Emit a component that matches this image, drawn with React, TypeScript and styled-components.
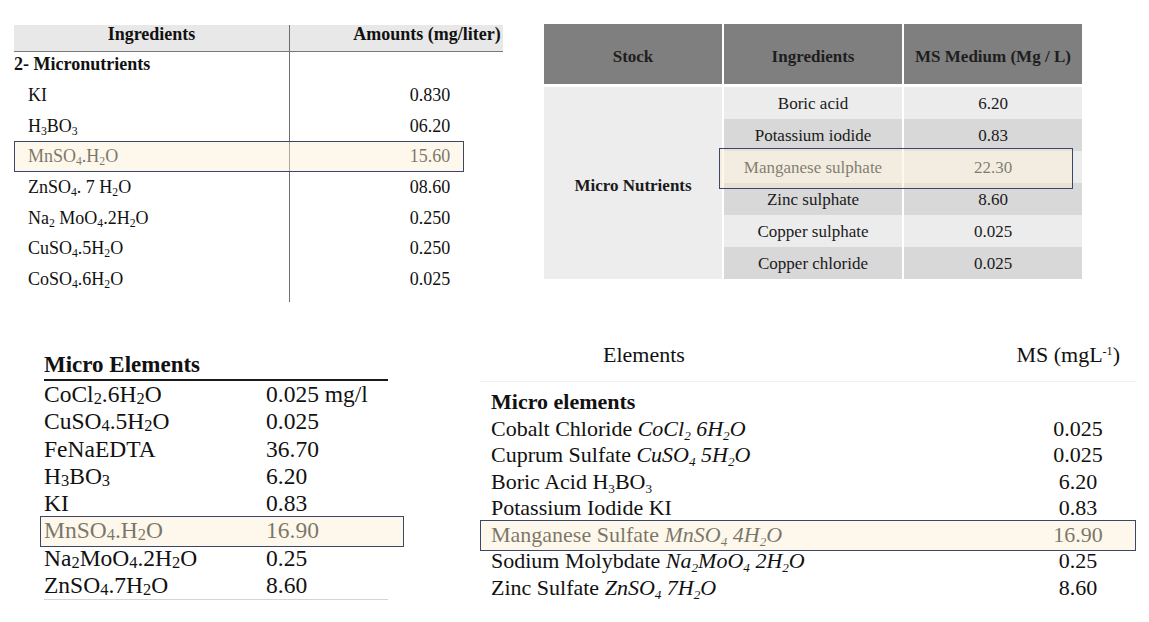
import React from 'react';
import styled, { createGlobalStyle, css } from 'styled-components';

const GlobalStyle = createGlobalStyle`
  html, body {
    margin: 0;
    padding: 0;
    background: #fff;
  }
  body {
    font-family: "Liberation Serif", "Times New Roman", serif;
    color: #111;
  }
`;

// the blue-framed cream box drawn over one row of each table
const highlightBox = css`
  content: '';
  position: absolute;
  z-index: 2;
  box-sizing: border-box;
  border: 1.5px solid #3b4769;
  background: rgba(250, 240, 210, 0.45);
  pointer-events: none;
`;

const Page = styled.div`
  width: 1149px;
  height: 622px;
  overflow: hidden;
  background: #fff;
`;

const TopRow = styled.div`
  display: flex;
  align-items: flex-start;
  gap: 41px;
  height: 340px;
  box-sizing: border-box;
  padding: 24px 0 0 14px;
`;

const BottomRow = styled.div`
  display: flex;
  align-items: flex-start;
  gap: 92px;
  padding-left: 44px;
`;

const Sub = styled.sub<{ $drop?: number; $size?: number }>`
  font-size: ${p => p.$size ?? 0.65}em;
  vertical-align: ${p => p.$drop ?? -0.25}em;
  line-height: 0;
`;

const Sup = styled.sup`
  font-size: 0.55em;
  vertical-align: 0.6em;
  line-height: 0;
`;

/* ---------- table 1 : ingredients / amounts ---------- */

const SheetTable = styled.div`
  width: 489px;
  margin-top: 1px;
  overflow: hidden;
  font-size: 18px;
`;

const SheetHead = styled.div`
  display: grid;
  grid-template-columns: 276px 280px;
  height: 26px;
  line-height: 18px;
  background: #e8e8e8;
  border-bottom: 1px solid #7a7a7a;
  font-weight: bold;
`;

const SheetHeadCell = styled.div<{ $divider?: boolean }>`
  text-align: center;
  white-space: nowrap;
  padding-right: ${p => (p.$divider ? '0' : '6px')};
  border-right: ${p => (p.$divider ? '1px solid #6e6e6e' : 'none')};
`;

const SheetBody = styled.div`
  padding-bottom: 7px;
  background: linear-gradient(#6e6e6e, #6e6e6e) 275px 0 / 1px 100% no-repeat;
`;

const SheetSection = styled.div`
  height: 28px;
  line-height: 24px;
  font-weight: bold;
`;

const SheetRow = styled.div<{ $hl?: boolean }>`
  position: relative;
  display: grid;
  grid-template-columns: 276px 280px;
  height: 30.7px;
  line-height: 30.7px;
  white-space: nowrap;

  ${p =>
    p.$hl &&
    css`
      &::after {
        ${highlightBox};
        left: 0;
        top: 0;
        bottom: 0;
        width: 450px;
      }
    `}
`;

const SheetName = styled.div`
  padding-left: 14px;
`;

const SheetAmount = styled.div`
  text-align: center;
`;

/* ---------- table 2 : stock / MS medium ---------- */

const StockTable = styled.div`
  display: grid;
  grid-template-columns: repeat(3, 178px);
  column-gap: 2px;
  width: 538px;
  font-size: 17px;
  color: #1a1a1a;
`;

const StockHead = styled.div`
  display: flex;
  align-items: center;
  justify-content: center;
  box-sizing: border-box;
  height: 60px;
  padding-top: 6px;
  margin-bottom: 3px;
  background: #7f7f7f;
  font-weight: bold;
  color: #1e1e1e;
  white-space: nowrap;
`;

const StockGroup = styled.div`
  grid-row: span 6;
  display: flex;
  align-items: center;
  justify-content: center;
  padding-top: 6px;
  background: #ededed;
  font-weight: bold;
`;

const StockCell = styled.div<{ $shade?: boolean; $hl?: boolean }>`
  position: relative;
  display: flex;
  align-items: center;
  justify-content: center;
  box-sizing: border-box;
  height: 32px;
  padding-top: 2px;
  background: ${p => (p.$shade ? '#d8d8d8' : '#ececec')};
  white-space: nowrap;

  ${p =>
    p.$hl &&
    css`
      &::after {
        ${highlightBox};
        left: -5px;
        top: -3px;
        width: 354px;
        height: 41px;
      }
    `}
`;

/* ---------- table 3 : micro elements list ---------- */

const ElementList = styled.div`
  width: 344px;
  margin-top: 11px;
  font-size: 23.5px;
  border-bottom: 1px solid #d4d4d4;
`;

const ListTitle = styled.div`
  font-size: 23px;
  font-weight: bold;
  line-height: 28px;
  border-bottom: 2px solid #1a1a1a;
`;

const ListRow = styled.div<{ $hl?: boolean }>`
  position: relative;
  display: grid;
  grid-template-columns: 222px 1fr;
  height: 27.3px;
  line-height: 27.3px;
  white-space: nowrap;

  ${p =>
    p.$hl &&
    css`
      &::after {
        ${highlightBox};
        left: -4px;
        right: -16px;
        top: -1px;
        bottom: -2px;
      }
    `}
`;

/* ---------- table 4 : elements / MS ---------- */

const MediumTable = styled.div`
  width: 656px;
  font-size: 22px;
`;

const MediumHead = styled.div`
  display: grid;
  grid-template-columns: 500px 156px;
  height: 30px;
  line-height: 30px;
  padding-bottom: 11px;
  border-bottom: 1px solid #f0f0f0;
  white-space: nowrap;
`;

const MediumHeadName = styled.div`
  padding-left: 123px;
`;

const MediumHeadValue = styled.div`
  text-align: right;
  padding-right: 16px;
`;

const MediumBody = styled.div`
  padding-top: 7px;
`;

const MediumSection = styled.div`
  height: 26.5px;
  line-height: 26.5px;
  padding-left: 11px;
  font-weight: bold;
`;

const MediumRow = styled.div<{ $hl?: boolean }>`
  position: relative;
  display: grid;
  grid-template-columns: 548px 100px;
  height: 26.5px;
  line-height: 26.5px;
  white-space: nowrap;

  ${p =>
    p.$hl &&
    css`
      &::after {
        ${highlightBox};
        left: 0;
        right: 0;
        top: -1.5px;
        bottom: -3px;
      }
    `}
`;

const MediumName = styled.div`
  padding-left: 11px;
`;

const MediumValue = styled.div`
  text-align: center;
`;

const Formula = styled.i`
  font-style: italic;
`;

type Entry = { name: React.ReactNode; value: string; hl?: boolean };

const sheetRows: Entry[] = [
  { name: 'KI', value: '0.830' },
  { name: <>H<Sub>3</Sub>BO<Sub>3</Sub></>, value: '06.20' },
  { name: <>MnSO<Sub>4</Sub>.H<Sub>2</Sub>O</>, value: '15.60', hl: true },
  { name: <>ZnSO<Sub>4</Sub>. 7 H<Sub>2</Sub>O</>, value: '08.60' },
  { name: <>Na<Sub>2</Sub> MoO<Sub>4</Sub>.2H<Sub>2</Sub>O</>, value: '0.250' },
  { name: <>CuSO<Sub>4</Sub>.5H<Sub>2</Sub>O</>, value: '0.250' },
  { name: <>CoSO<Sub>4</Sub>.6H<Sub>2</Sub>O</>, value: '0.025' },
];

const stockRows: Entry[] = [
  { name: 'Boric acid', value: '6.20' },
  { name: 'Potassium iodide', value: '0.83' },
  { name: 'Manganese sulphate', value: '22.30', hl: true },
  { name: 'Zinc sulphate', value: '8.60' },
  { name: 'Copper sulphate', value: '0.025' },
  { name: 'Copper chloride', value: '0.025' },
];

const s = (n: string) => (
  <Sub $size={0.7} $drop={-0.1}>
    {n}
  </Sub>
);

const listRows: Entry[] = [
  { name: <>CoCl{s('2')}.6H{s('2')}O</>, value: '0.025 mg/l' },
  { name: <>CuSO{s('4')}.5H{s('2')}O</>, value: '0.025' },
  { name: 'FeNaEDTA', value: '36.70' },
  { name: <>H{s('3')}BO{s('3')}</>, value: '6.20' },
  { name: 'KI', value: '0.83' },
  { name: <>MnSO{s('4')}.H{s('2')}O</>, value: '16.90', hl: true },
  { name: <>Na{s('2')}MoO{s('4')}.2H{s('2')}O</>, value: '0.25' },
  { name: <>ZnSO{s('4')}.7H{s('2')}O</>, value: '8.60' },
];

const t = (n: string) => (
  <Sub $size={0.6} $drop={-0.3}>
    {n}
  </Sub>
);

const mediumRows: Entry[] = [
  { name: <>Cobalt Chloride <Formula>CoCl{t('2')} 6H{t('2')}O</Formula></>, value: '0.025' },
  { name: <>Cuprum Sulfate <Formula>CuSO{t('4')} 5H{t('2')}O</Formula></>, value: '0.025' },
  { name: <>Boric Acid H{t('3')}BO{t('3')}</>, value: '6.20' },
  { name: 'Potassium Iodide KI', value: '0.83' },
  { name: <>Manganese Sulfate <Formula>MnSO{t('4')} 4H{t('2')}O</Formula></>, value: '16.90', hl: true },
  { name: <>Sodium Molybdate <Formula>Na{t('2')}MoO{t('4')} 2H{t('2')}O</Formula></>, value: '0.25' },
  { name: <>Zinc Sulfate <Formula>ZnSO{t('4')} 7H{t('2')}O</Formula></>, value: '8.60' },
];

export default function App() {
  return (
    <>
      <GlobalStyle />
      <Page>
        <TopRow>
          <SheetTable>
            <SheetHead>
              <SheetHeadCell $divider>Ingredients</SheetHeadCell>
              <SheetHeadCell>Amounts (mg/liter)</SheetHeadCell>
            </SheetHead>
            <SheetBody>
              <SheetSection>2- Micronutrients</SheetSection>
              {sheetRows.map((r, i) => (
                <SheetRow key={i} $hl={r.hl}>
                  <SheetName>{r.name}</SheetName>
                  <SheetAmount>{r.value}</SheetAmount>
                </SheetRow>
              ))}
            </SheetBody>
          </SheetTable>

          <StockTable>
            <StockHead>Stock</StockHead>
            <StockHead>Ingredients</StockHead>
            <StockHead>MS Medium (Mg / L)</StockHead>
            <StockGroup>Micro Nutrients</StockGroup>
            {stockRows.map((r, i) => (
              <React.Fragment key={i}>
                <StockCell $shade={i % 2 === 1} $hl={r.hl}>
                  {r.name}
                </StockCell>
                <StockCell $shade={i % 2 === 1}>{r.value}</StockCell>
              </React.Fragment>
            ))}
          </StockTable>
        </TopRow>

        <BottomRow>
          <ElementList>
            <ListTitle>Micro Elements</ListTitle>
            {listRows.map((r, i) => (
              <ListRow key={i} $hl={r.hl}>
                <div>{r.name}</div>
                <div>{r.value}</div>
              </ListRow>
            ))}
          </ElementList>

          <MediumTable>
            <MediumHead>
              <MediumHeadName>Elements</MediumHeadName>
              <MediumHeadValue>
                MS (mgL<Sup>-1</Sup>)
              </MediumHeadValue>
            </MediumHead>
            <MediumBody>
              <MediumSection>Micro elements</MediumSection>
              {mediumRows.map((r, i) => (
                <MediumRow key={i} $hl={r.hl}>
                  <MediumName>{r.name}</MediumName>
                  <MediumValue>{r.value}</MediumValue>
                </MediumRow>
              ))}
            </MediumBody>
          </MediumTable>
        </BottomRow>
      </Page>
    </>
  );
}
